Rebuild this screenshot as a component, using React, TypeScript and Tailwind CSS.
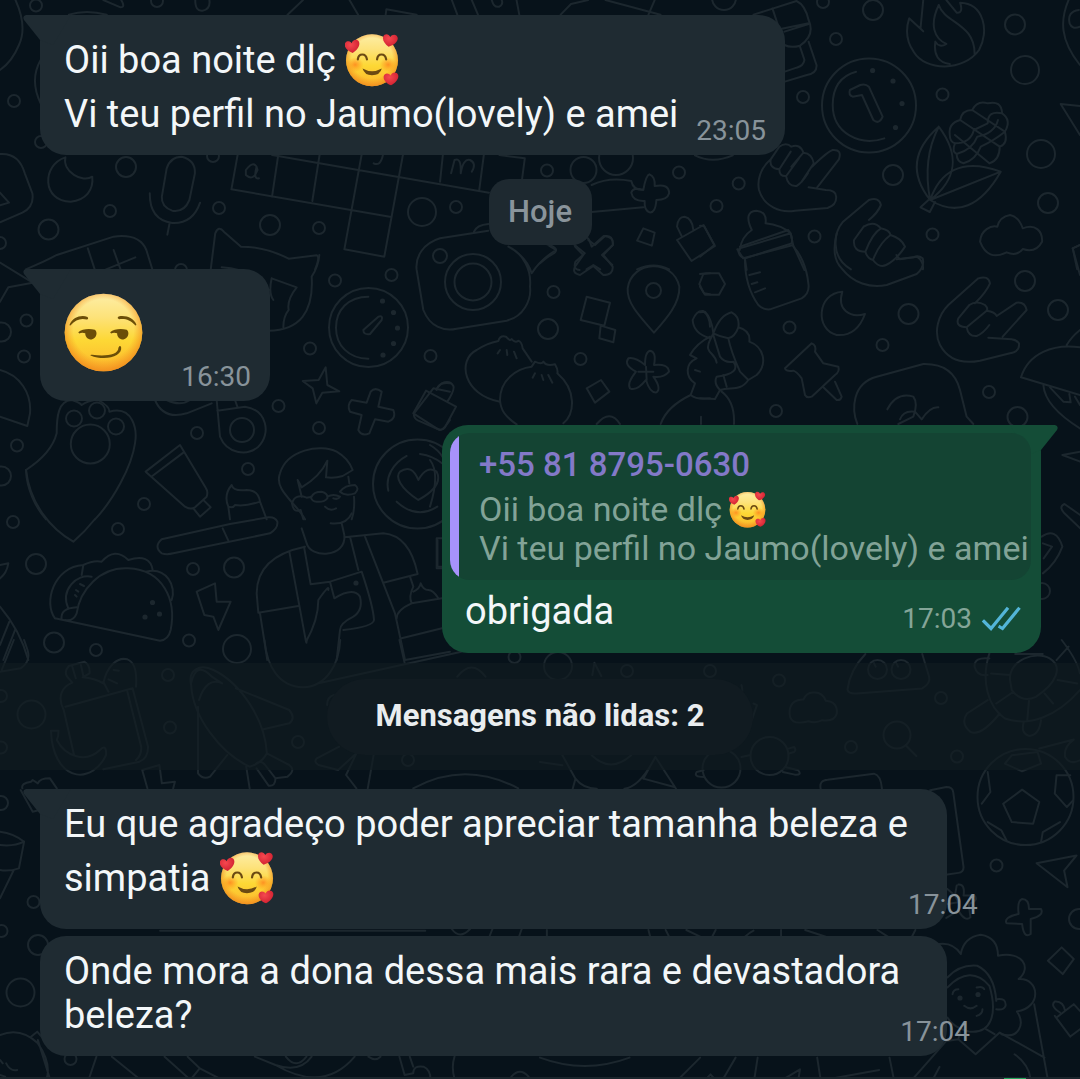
import React from "react";

const CIRCLES: [number, number, number][] = [
  [36, 5.5, 6], [14, 101, 6], [41, 142, 6], [126, 167, 10], [110, 211, 6], [48.5, 229.5, 10], [0, 243, 6],
  [219, 208, 6], [270, 225, 10], [319, 228, 6], [422, 212, 14], [456, 207, 6], [440, 256, 7], [181, 270, 6],
  [213, 156, 6], [157, 1, 6], [724, -2, 12], [823, 2, 6], [873, 10, 10], [836, 39, 6], [1015, 24.5, 10],
  [1025, 70, 14], [803, 97, 6], [942.5, 94.5, 6], [1041, 154, 14], [1048, 203, 10], [893, 175, 10],
  [932.5, 234.5, 6], [814.5, 236.5, 6], [716.5, 206, 6], [738.7, 183.5, 6], [679, 172.5, 6], [547, 170.5, 6],
  [583.5, 170, 13], [616, 158, 17], [869, 105.5, 47], [26.5, 320.5, 6], [1.5, 332, 9.5], [24, 356.5, 6],
  [335, 280.5, 6], [391.5, 275, 6], [310, 348.5, 6], [430.5, 356, 6], [278.5, 406, 6], [319, 428, 6],
  [197, 433, 6], [17, 445.5, 6], [1.5, 476, 9.5], [248, 469, 6], [144, 504, 6], [13, 522, 6],
  [74, 418.5, 8], [97, 410.5, 8], [116, 426.5, 8], [90.3, 444, 19.5], [368.5, 327.5, 39.5], [242, 430, 12],
  [548, 329, 10], [553.5, 292, 6], [580.5, 359, 6], [473, 282, 28], [473, 282, 18.5], [653.5, 290.5, 7.5],
  [789.5, 327.5, 6], [882.5, 345, 6], [908.5, 314, 10], [1025, 281, 10], [1058, 310, 10], [989, 392, 6],
  [1017.5, 417, 10], [776, 411, 6], [36, 564, 10], [54, 642.5, 10], [96, 650, 6], [118, 529, 6],
  [193, 569, 6], [234, 567.5, 10], [189, 640.5, 6], [237, 649, 14], [417.5, 484, 44.5], [1, 696, 6],
  [31.5, 714.5, 14], [1, 747.5, 6], [168, 675, 6], [170, 727.5, 6], [298, 742, 6], [408, 760, 6],
  [514.5, 657, 6], [1, 803, 7], [558, 666, 14], [627, 671, 6], [710, 671, 6], [779, 680.5, 6],
  [941, 698, 6], [851, 747, 6], [957, 756.5, 6], [996.5, 865.5, 6], [1079, 919, 10], [721.5, 768.5, 19],
  [769.5, 756, 19], [897, 735, 13.5], [877.5, 669.5, 9.5], [901, 669.5, 9.5], [1025.5, 797, 48],
  [33.5, 902, 6], [38, 945, 10], [1.5, 931, 6], [20.5, 992.5, 14], [70.5, 1059, 6], [1042, 591, 8],
];

const DOTS: [number, number][] = [
  [872.6, 70.5], [893, 81], [902, 103.5], [895.5, 127.5], [382.5, 301], [393.5, 312.5], [397.5, 328],
  [393.5, 343.5], [383, 355], [152.5, 602.5], [145, 617], [159.5, 614], [356, 583], [960, 998], [978, 994.5],
];

/** Each group of outlines is drawn in its own local space and placed by its transform. */
const DOODLES: { at: string; paths: string[] }[] = [
  {
    at: "translate(0 0) scale(.34435 .33333)",
    paths: [
      "M45 0Q80 80 55 135Q35 185 0 210M118 180Q85 240 118 310M200 44Q250 28 310 44",
      "M300 0L350 22Q365 22 352 0M567 0Q567 35 588 32Q612 28 608 0",
      "M835 44L880 0M1015 0L1040 44M1120 44L1122 28L1210 44M1312 0L1328 44M1370 0L1388 44M1428 0Q1434 24 1450 20Q1462 14 1457 0M1500 0L1508 44",
      "M0 462Q55 458 72 520L94 580Q100 620 65 638L0 667M0 578L26 608L0 616",
      "M190 472C120 495 122 605 205 605C250 600 272 570 268 530C240 550 180 515 190 472Z",
      "M484 505Q495 470 528 470Q568 480 566 520L550 600Q535 638 500 632Q468 620 470 590ZM435 580Q434 660 500 669Q560 672 581 608M492 672L486 704",
      "M690 465L672 568L1132 650M808 465L790 590M928 465L907 603M1050 465L1000 748L1116 770L1170 465M1286 465L1278 545M1405 465L1392 568M1524 475L1516 538M790 465L1420 578M1450 465L1524 475",
      "M714 510Q740 475 748 510Q735 545 714 525ZM745 500Q735 540 752 535",
      "M1085 490Q1105 500 1112 465M1310 520L1320 480Q1340 470 1338 520Q1345 475 1365 480Q1385 490 1370 515",
      "M75 808Q130 785 165 765L330 710Q405 700 425 750L443 810M255 745L275 808M330 750L350 808M308 808L393 772",
      "M612 808L625 700Q635 675 650 695L700 740Q770 740 838 776L920 766Q930 770 915 808",
    ],
  },
  {
    at: "translate(540 0) scale(.34435 .33333)",
    paths: [
      "M60 44L90 12L140 0M190 0L350 44M315 44L333 0M620 44L745 3Q770 15 780 60Q800 105 755 137Q728 145 710 135M675 25L695 88L780 70M710 95L780 72M780 125L803 195Q805 220 775 225L711 245M755 140L768 180Q765 198 745 203L711 215",
      "M918 215C865 230 850 270 850 315C850 400 930 440 1000 415",
      "M900 270Q895 285 908 290L935 285L968 360Q985 375 995 350L955 260Q945 250 930 255Z",
      "M1113 0L1105 85L1113 94L1072 55Q1055 110 1085 155C1120 215 1230 215 1275 150C1305 95 1290 10 1220 8Q1230 40 1210 38L1180 0M1158 15C1130 75 1145 115 1180 132Q1160 145 1148 125Q1140 185 1190 192M1158 15C1175 70 1265 70 1262 165",
      "M1535 0C1510 60 1510 120 1568 195M1565 30Q1530 35 1538 70Q1545 90 1568 80M1568 318L1512 312L1568 405",
      "M1133 600C1080 530 1075 455 1158 380C1220 465 1210 540 1133 600ZM1158 380C1120 455 1120 530 1133 600C1160 520 1220 470 1338 515C1280 620 1210 650 1133 600L1338 515M1128 600L1105 622L1132 636L1147 606",
      "M1190 405Q1185 370 1220 360Q1225 330 1255 330Q1270 300 1300 310Q1340 300 1342 340Q1370 360 1350 395Q1360 430 1335 440Q1335 480 1305 490M1190 405Q1190 425 1205 430Q1195 455 1210 462Q1210 485 1230 490M1205 430Q1250 430 1260 390L1300 370Q1300 330 1342 340M1220 360L1335 440M1255 330L1350 395M1210 462Q1255 450 1270 410Q1320 400 1330 360M1230 490Q1265 480 1280 440Q1320 420 1350 395M1205 405L1305 490",
      "M670 478C640 505 630 540 636 570C650 620 700 640 740 632L835 624Q862 615 860 590Q860 570 830 570L780 562M805 562L868 478Q878 448 850 450Q835 455 790 500M670 478Q665 505 695 508L728 455M670 478L695 440Q715 425 730 440Q755 430 765 458Q790 460 795 490M695 508Q695 530 715 528L752 475M715 530Q720 560 745 558Q760 550 778 520M765 458L730 500M795 490L760 545",
      "M580 750Q585 710 615 690Q590 635 628 632Q660 635 655 670Q700 675 728 700L735 735L590 775L573 748ZM728 700L580 745M595 775L600 810M735 735L768 810",
      "M903 808C840 770 855 695 880 665L955 600Q985 590 990 615Q980 640 955 660M940 680L912 720Q908 755 945 755Q965 700 990 685Q970 660 940 680M990 685Q1015 690 1018 705Q985 730 967 780Q985 805 1005 795Q1035 780 1060 740Q1050 715 1018 705M945 755Q950 775 967 780M1035 765L1045 778L1095 770Q1115 785 1112 808",
      "M1278 725C1280 690 1310 675 1328 680Q1335 650 1365 645Q1390 650 1402 685C1440 670 1460 695 1458 725Q1440 760 1402 747Q1385 770 1355 757Q1300 785 1278 725Z",
      "M300 685L333 698L325 737L282 722ZM398 720L475 675L508 738L440 783ZM412 710L398 680Q400 650 420 650Q442 655 445 688",
      "M150 555Q200 530 265 543Q270 570 300 570Q308 525 318 523Q335 530 333 558Q375 550 375 580Q370 600 338 600Q335 640 318 637Q302 630 304 603Q270 605 265 578Q270 560 300 570M150 636L300 622M450 466Q500 492 560 466",
      "M98 733L130 760L103 785Q95 808 115 810M130 715Q140 705 150 740L185 708Q215 710 212 735L180 765L210 795M135 808L155 795L175 808M282 808Q330 785 375 808M20 733Q60 745 40 760Q20 770 0 790M1547 745L1568 735M1547 745L1560 808",
    ],
  },
  {
    at: "translate(0 250) scale(.33333)",
    paths: [
      "M0 38L98 98L25 112L0 155M665 52Q750 55 806 120M815 85L890 112Q860 150 866 180Q850 200 850 232M958 15Q955 50 935 80Q945 240 806 242M815 85Q805 130 820 150",
      "M1105 140C1045 140 1008 180 1008 233C1008 285 1045 326 1105 326M1090 240L1135 200Q1150 195 1145 210L1110 252Q1090 255 1090 240Z",
      "M977 352L982 405L1018 424L967 428L949 460L938 415L908 393L956 390Z",
      "M1112 425Q1125 410 1145 425L1135 470L1180 480Q1190 505 1165 515L1125 508L1108 550Q1085 560 1075 540L1085 495L1050 485Q1040 465 1055 450L1100 458Z",
      "M1350 425L1300 415L1242 490Q1240 505 1255 512L1320 540Q1330 540 1350 510M1310 420Q1315 395 1350 400",
      "M0 360C60 375 95 430 90 490L82 528L0 500",
      "M170 550C170 500 175 452 215 450Q235 455 245 465Q265 450 295 450Q330 470 328 485C400 465 412 540 405 580C395 650 340 750 285 808M170 550Q155 610 78 660C80 715 105 770 138 808",
      "M465 450Q490 510 560 490L635 460M650 450L660 560C680 610 740 620 775 590C815 550 800 480 735 470L652 482M705 450L712 470M500 450Q540 470 570 450",
      "M540 585L437 665L555 770Q570 780 585 772L620 740Q625 725 618 715ZM457 678L550 608M580 775L600 800L632 772L612 752",
      "M690 808L685 770Q670 735 695 705Q700 725 740 720Q775 720 780 755L800 808M685 770Q700 775 705 765Q735 770 780 755",
      "M915 808C890 760 820 720 840 670C860 600 960 580 1010 605Q1045 625 1058 660L1028 678Q1005 685 978 682L982 632Q960 680 905 712L893 690L905 740",
      "M920 743Q885 730 876 760Q880 790 902 780L910 808M920 743L935 740Q940 725 965 725Q985 730 982 745Q970 758 950 755Q935 755 932 740M982 740Q1000 730 1020 740Q1015 750 1000 745M1020 725Q1035 705 1065 705Q1080 715 1065 730Q1035 740 1020 725M1045 680L1048 700M1062 740Q1065 780 1055 808M975 770Q990 785 1008 775",
      "M1220 618C1180 640 1155 680 1165 722M1260 612Q1300 618 1326 640M1190 755Q1250 810 1312 770M1255 750C1200 715 1185 680 1200 665Q1235 640 1255 690Q1280 645 1310 665C1325 695 1300 725 1255 750Z",
    ],
  },
  {
    at: "translate(270 150) scale(.33333)",
    paths: [
      "M612 245Q620 225 655 222M655 242L510 265C460 280 435 320 440 360L460 480C480 530 520 545 560 536L710 512C760 500 785 450 780 410C785 360 760 310 715 290M715 290Q770 320 785 370Q810 330 858 300L838 288",
      "M915 290L940 315L915 350Q905 370 930 375L970 348L1000 375Q1030 375 1028 350L1000 315L1028 285Q1030 255 1005 258L975 285L955 270",
      "M950 440L1020 458L1003 527L932 510ZM992 527L1036 540L1030 577L988 565Z",
      "M1152 548C1110 500 1070 460 1073 415C1085 330 1210 325 1228 410C1230 460 1190 505 1152 548ZM1320 370L1300 372L1288 402L1302 430L1320 433",
      "M690 755C580 735 560 630 620 600Q650 580 685 573Q690 555 708 560Q720 575 725 567Q735 580 745 572Q755 575 758 595L785 635M690 600L683 610M710 600L712 615M732 605L740 625",
      "M690 750C690 690 740 655 785 650L795 635Q815 645 820 635Q830 650 855 643Q865 660 862 670C920 720 915 790 880 820M740 823C705 800 692 780 690 750M795 670L788 683M815 675L820 690M835 675L847 698",
      "M430 790L468 722L558 770L525 832Q515 845 500 835ZM498 718L515 700Q540 690 550 708Q555 720 532 755M950 715L993 690L1018 725L975 758ZM980 822Q1020 775 1050 822",
      "M1140 602Q1160 605 1152 645Q1195 640 1197 665Q1180 685 1150 680Q1175 715 1160 727Q1140 730 1128 690Q1100 725 1080 715Q1070 700 1098 665Q1060 645 1075 625Q1095 620 1125 645Q1125 605 1140 602ZM1128 650L1130 690M1105 665L1150 665",
      "M1320 565Q1270 550 1268 510Q1280 480 1300 483Q1320 500 1320 530M1320 560Q1280 580 1260 615L1280 625C1245 640 1245 680 1275 700L1262 735Q1280 750 1320 745M1262 735Q1190 770 1172 822M1275 660L1290 665M1293 800V822",
    ],
  },
  {
    at: "translate(700 150) scale(.33333)",
    paths: [
      "M135 330C135 390 150 430 175 465Q190 480 210 478L305 445Q330 430 325 400C320 350 300 310 280 290M120 290L265 240Q280 260 275 280L135 325Q115 320 115 300M148 375L180 367M155 402L172 397M165 427L195 415M0 227L12 228L43 285L0 320M0 372L18 370L57 370L75 402L57 434L15 434L0 410",
      "M410 250C400 290 400 330 425 355C460 400 510 415 560 405L650 372Q675 350 668 325Q655 315 640 322L590 328",
      "M427 425C350 430 345 540 410 555Q470 560 495 492C450 505 410 480 427 425Z",
      "M720 585C700 545 715 495 745 465L835 385Q865 375 870 400Q860 425 825 460M775 505L808 465Q830 450 855 465Q865 475 860 482M775 505Q765 530 800 532L860 482Q885 485 890 498L950 458Q975 455 980 480L908 560M800 532Q805 560 830 558Q850 550 868 525M720 585C750 640 800 640 840 632L930 610Q960 605 957 580Q950 570 935 568L865 563",
      "M0 487L15 485Q35 505 40 550Q60 495 95 487Q120 500 115 532C145 540 150 560 148 575C190 590 205 640 170 675L145 690L120 665C100 620 90 590 85 565Q60 560 40 550L30 570C10 610 45 605 50 638M115 532Q105 560 85 565M40 555L60 620Q75 640 100 635Q125 670 50 680Q40 700 60 720C95 710 120 725 145 690M60 720L45 747L0 745M65 725Q105 755 102 822M70 675L80 710",
      "M335 580Q350 585 345 605L370 640L415 650Q420 665 405 675L335 740Q320 745 315 735L305 685Q290 665 280 662Q255 665 255 655ZM405 695L425 740Q422 752 410 750L370 712",
      "M472 822C455 780 455 700 530 680L670 642Q760 640 780 720L800 800L820 822M562 778Q590 725 640 740Q655 760 640 800L595 822M600 808Q610 780 645 785L665 808Q690 770 715 772",
      "M1140 735L963 682C985 610 1060 580 1140 592M1100 585Q1115 560 1140 540M1030 705Q1035 770 1140 835M1050 712L1090 755L1112 757L1108 732M1125 740L1140 765M1140 285L1118 295L1140 375",
    ],
  },
  {
    at: "translate(0 400) scale(.33333)",
    paths: [
      "M78 210C90 310 150 385 220 425Q255 395 285 357",
      "M690 372L485 418Q460 440 485 460Q500 465 520 460L810 400Q835 385 832 365Q825 350 805 352L690 372M668 385L685 422",
      "M165 655L480 722Q505 720 512 690C530 600 490 510 385 505C300 500 240 570 230 640Q220 665 195 660M165 655C130 610 160 500 250 495Q280 480 305 485Q345 440 385 480Q450 460 458 510M438 515C500 500 530 560 515 600M250 495L245 525M205 625C180 570 230 520 275 530M185 658Q180 625 230 622M228 570L235 575M240 552L252 558M230 590L225 585",
      "M590 575L645 550L650 605L692 605L655 690L640 650L613 645Z",
      "M905 385L920 430C930 475 1040 475 1033 405L1025 370M992 370Q1040 375 1055 340M915 440Q770 470 770 580L775 638L895 618M868 455L918 725Q955 660 955 600Q990 550 985 570M912 440L932 553L990 545M1050 410L1075 510M1033 412L1150 400C1210 405 1240 460 1253 522L1150 548M1095 410L1185 640L1215 780M780 640L802 780M990 545L1085 515Q1120 620 1122 660Q1120 680 1030 690M990 545L1003 595Q1060 560 1080 590Q1090 630 1060 650Q1020 670 1020 690L1010 780",
      "M1326 415L1310 415V505H1326M1230 530L1240 560Q1225 590 1235 610L1326 595M1240 575Q1260 565 1262 550Q1270 570 1285 570Q1300 570 1315 595M1235 610Q1190 630 1190 655M1205 715L1326 685M1215 780L1350 755",
      "M0 495L25 490Q20 520 0 535M0 620Q60 690 85 780M28 665L0 735M45 690L10 780",
    ],
  },
  {
    at: "translate(0 640) scale(.34435 .33333)",
    paths: [
      "M0 95L60 85Q90 65 80 30L70 0M40 0L5 90M768 0C775 80 810 140 880 142C950 140 985 70 988 0M890 0V8M1160 0L1175 68M925 130L1340 35",
      "M185 210C165 170 180 140 210 128L195 110Q185 95 200 78L245 65Q262 75 260 100L240 112Q275 115 300 130M210 80L220 115M235 75L242 108M190 200L385 145L430 320Q430 355 405 365L300 388M300 130C310 80 340 50 370 58Q400 70 395 140M300 125L315 155M330 90L345 92M315 118L340 130M185 210L215 345M370 155L410 320Q412 345 395 360M148 272L170 272Q170 290 165 300C190 350 250 370 290 330Q310 310 308 345C270 430 170 430 150 300Z",
      "M555 135C545 90 580 70 620 90C700 130 770 240 775 340Q760 370 725 380C640 340 560 230 555 135ZM578 180Q600 110 645 130M555 130Q570 60 615 110L645 130M685 145L840 210Q860 235 840 250L765 268M575 200V400Q590 420 610 410L660 345M775 340L840 375Q860 390 835 410L800 415M740 375Q755 355 770 375L800 415Q800 440 780 437L745 385M715 380L725 445",
      "M65 445Q60 430 90 425L95 420L110 430Q115 415 145 415L165 445M413 390L463 375L470 430L508 425L503 445M413 390L428 445M985 320L920 355Q910 365 925 375L982 390L1035 340L1005 405L1035 445M1085 345L1068 445M1200 445Q1350 360 1505 445M1328 110Q1370 55 1410 110M950 195Q950 170 970 165",
    ],
  },
  {
    at: "translate(540 640) scale(.34435 .3341)",
    paths: [
      "M152 105L158 68L178 108M0 365L65 375M65 345L103 415L95 445M103 415Q125 445 165 445M300 415L335 350L395 445M300 415L390 440M245 445Q290 440 335 350M150 345Q205 400 265 345",
      "M725 210C730 180 750 180 765 178Q775 155 795 157Q820 155 830 182Q865 185 862 220Q855 245 820 240Q800 250 780 243Q720 260 725 210ZM1062 315L1093 347",
      "M945 42Q900 90 893 148Q895 162 920 160L1110 145Q1135 130 1130 110L1110 42M970 70L975 80M1035 70L1040 80",
      "M585 350L608 345M722 325L738 320Q745 330 738 335L722 340M712 380L750 390Q762 405 740 403L705 395M475 390L455 395Q445 410 475 410M585 135Q590 150 585 165M620 190L630 195L615 240M815 445Q810 420 835 418L970 400Q990 405 993 445M1133 450L1180 440Q1198 440 1200 455L1230 680Q1230 695 1215 697L1183 702",
      "M1305 55Q1260 50 1262 80Q1270 110 1300 105M1380 42L1460 42M1365 120C1360 60 1440 30 1480 55C1520 80 1500 130 1440 170Q1400 190 1370 150ZM1305 40C1280 120 1300 200 1350 235C1420 260 1500 230 1568 150M1310 100L1365 105M1500 60L1535 20M1503 120L1560 130M1465 160L1490 190M1420 182L1415 240M1375 155L1325 190M1515 0Q1560 60 1568 100M1300 180L1240 220Q1220 250 1250 275Q1280 290 1335 220M1405 245Q1395 280 1420 287Q1450 285 1455 240",
      "M1400 448L1450 485L1432 550L1370 545L1345 490ZM1350 370L1370 345L1445 335L1455 370L1400 393ZM1300 395L1308 455L1283 490M1500 405L1540 405M1500 405L1495 460L1530 500L1548 480M1300 545L1340 570L1355 600M1455 605L1460 575L1510 545M1450 325L1550 298Q1520 320 1525 350Q1540 375 1568 360",
      "M1558 645L1442 668L1532 740L1522 690ZM1215 732Q1235 730 1230 765L1262 765Q1275 780 1245 790L1250 830Q1235 845 1215 810L1180 832M1183 790L1215 785L1205 765M1183 745L1205 765L1210 735",
      "M1400 775Q1420 775 1420 805L1455 805Q1465 825 1425 835L1425 880Q1405 895 1400 850L1355 848Q1345 830 1390 820Q1385 780 1400 775ZM1515 920L1550 955L1518 1000L1475 960Z",
      "M1160 910Q1200 905 1222 940Q1230 890 1280 882Q1330 890 1330 945C1400 930 1430 980 1390 1015C1450 1010 1460 1100 1385 1112C1410 1150 1390 1195 1340 1180M1183 1010Q1220 970 1270 975Q1320 1000 1325 1080M1183 1040Q1250 970 1305 1035C1330 1120 1310 1180 1245 1172Q1200 1160 1183 1130M1325 1075Q1355 1070 1352 1095Q1345 1110 1325 1105M1198 1060Q1200 1045 1215 1045M1268 1040Q1285 1035 1290 1045M1232 1095Q1250 1110 1268 1095M1268 1125Q1285 1120 1285 1105",
      "M1220 1172L1215 1195L1265 1240L1335 1175L1465 1250M1295 1165L1320 1180M1215 1195L1180 1200L1080 1317M1160 1278L1140 1317M1378 1240Q1420 1270 1425 1317M1435 1090L1475 1317M1500 1130L1550 1090L1568 1110M1495 1125L1540 1187L1568 1165M1510 1115Q1480 1095 1495 1082Q1520 1080 1525 1110",
      "M0 1250Q130 1300 260 1250M465 1250L400 1317M568 1250L530 1317M632 1250L622 1317M805 1250L815 1317M1015 1250L1028 1317M480 1317L495 1300L510 1317M715 1310L755 1285L750 1317M860 1310L985 1287",
      "M20 868V888M315 868L320 888M365 868L375 888M425 868L465 888M500 888L510 868M595 888Q610 875 620 870M700 868V888M770 868L830 888M980 868L1010 888M1080 888L1090 868",
    ],
  },
  {
    at: "translate(0 780) scale(.34435 .33333)",
    paths: [
      "M0 155Q40 160 70 185L55 265Q25 275 0 270M0 195Q40 200 70 185M40 270L0 355M60 30L95 95L115 90M465 452H1235M1312 447Q1335 480 1365 447M1430 447L1422 468M1515 447L1508 468",
      "M0 765Q60 740 110 790Q150 850 135 897M90 770L108 755L145 800M110 780L145 897M0 840L8 850M18 850Q30 875 50 870M0 885L15 890M280 830L258 897M325 830L405 897M478 830L550 897M545 830L580 865L555 897M580 865L640 897M740 830L800 855Q870 880 905 830M830 830Q860 870 890 830M800 855Q940 940 1030 830M1160 830L1175 885L1200 880Q1200 855 1230 860Q1250 870 1250 897M1190 830L1200 860M1320 830Q1310 860 1320 897M1485 890Q1510 860 1535 890M1070 830Q1090 845 1105 830",
    ],
  },
  {
    at: "translate(430 410) scale(.41467 .33333)",
    paths: [
      "M1568 125L1525 135L1568 155M1568 355L1530 310Q1515 290 1530 282L1568 315M1475 380Q1510 350 1525 410Q1510 460 1478 490M1478 400L1500 410L1480 445",
      "M0 105Q20 120 30 140M0 150Q25 190 0 290M18 390V470H30",
    ],
  },
];

function Wallpaper() {
  return (
    <svg
      className="absolute inset-0 h-full w-full"
      viewBox="0 0 1080 1079"
      fill="none"
      stroke="#1c272e"
      strokeWidth="2"
      strokeLinecap="round"
      strokeLinejoin="round"
      aria-hidden="true"
    >
      {CIRCLES.map(([cx, cy, r], i) => (
        <circle key={i} cx={cx} cy={cy} r={r} />
      ))}
      {DOTS.map(([cx, cy], i) => (
        <circle key={i} cx={cx} cy={cy} r="2.6" fill="#1c272e" stroke="none" />
      ))}
      {DOODLES.map((group, i) => (
        <g key={i} transform={group.at}>
          {group.paths.map((d, j) => (
            <path key={j} d={d} vectorEffect="non-scaling-stroke" />
          ))}
        </g>
      ))}
    </svg>
  );
}

function EmojiDefs() {
  return (
    <svg className="absolute h-0 w-0" aria-hidden="true">
      <defs>
        <linearGradient id="faceFill" x1="0" y1="0" x2="0" y2="1">
          <stop offset="0" stopColor="#fdeea6" />
          <stop offset=".3" stopColor="#fde27a" />
          <stop offset=".6" stopColor="#fdd835" />
          <stop offset="1" stopColor="#fcb52c" />
        </linearGradient>
        <radialGradient id="faceRim" cx=".5" cy=".46" r=".54">
          <stop offset=".72" stopColor="#f59021" stopOpacity="0" />
          <stop offset="1" stopColor="#f08a1d" stopOpacity=".85" />
        </radialGradient>
        <radialGradient id="blush">
          <stop offset="0" stopColor="#ff7a1c" stopOpacity=".75" />
          <stop offset="1" stopColor="#ff8a1c" stopOpacity="0" />
        </radialGradient>
        <radialGradient id="heartFill" cx=".4" cy=".35" r=".7">
          <stop offset="0" stopColor="#f5484f" />
          <stop offset="1" stopColor="#cf1f2f" />
        </radialGradient>
      </defs>
    </svg>
  );
}

function Heart({ at }: { at: string }) {
  return (
    <path
      transform={at}
      fill="url(#heartFill)"
      d="M-2 20C-14 14 -24 4 -22 -8C-19 -19 -6 -18 -1 -9C3 -19 17 -21 21 -10C24 2 12 14 -2 20Z"
    />
  );
}

function LovedFace({ className }: { className: string }) {
  return (
    <svg className={className} viewBox="32 24 160 160" role="img" aria-label="🥰">
      <circle cx="112" cy="105" r="77" fill="url(#faceFill)" />
      <circle cx="112" cy="105" r="77" fill="url(#faceRim)" />
      <ellipse cx="62" cy="118" rx="25" ry="22" fill="url(#blush)" />
      <ellipse cx="160" cy="118" rx="25" ry="22" fill="url(#blush)" />
      <g fill="none" stroke="#6b4a12" strokeWidth="6.5" strokeLinecap="round">
        <path d="M70 102C72 83 94 83 97 102" />
        <path d="M127 102C129 83 151 83 154 102" />
      </g>
      <path d="M84 129Q112 145 141 129Q136 149 112 149Q90 149 84 129Z" fill="#6b4a12" />
      <Heart at="translate(54 63) rotate(-8)" />
      <Heart at="translate(166 45) rotate(8)" />
      <Heart at="translate(169 159) rotate(-4)" />
    </svg>
  );
}

function SmirkFace() {
  return (
    <svg className="size-[79px]" viewBox="43 40 238 238" role="img" aria-label="😏">
      <circle cx="162" cy="159" r="117" fill="url(#faceFill)" />
      <circle cx="162" cy="159" r="117" fill="url(#faceRim)" />
      <g fill="#6b4e08">
        <path d="M60 135C70 112 95 105 114 112Q118 119 112 120C94 115 78 120 63 137Q59 139 60 135Z" />
        <path d="M205 116Q203 111 210 110C233 107 254 117 261 135Q260 140 256 136C243 120 225 116 209 119Z" />
        <path d="M86 158C97 148 120 146 136 151C145 157 142 177 126 180C114 180 107 172 107 161Q96 158 89 162Z" />
        <path d="M182 158C193 148 216 146 232 151C241 157 238 177 222 180C210 180 203 172 203 161Q192 158 185 162Z" />
        <path d="M123 228Q121 225 128 226C165 231 207 228 207 205Q210 196 215 202C221 232 165 246 123 228Z" />
      </g>
    </svg>
  );
}

function Tail({ side }: { side: "in" | "out" }) {
  return side === "in" ? (
    <svg className="absolute top-0 -left-[17px] h-[30px] w-[48px]" viewBox="0 0 48 30" aria-hidden="true">
      <path d="M48 0H3Q-1 1 1 5L17 25L30 30Z" fill="#1f2b32" />
    </svg>
  ) : (
    <svg className="absolute top-0 -right-[17px] h-[30px] w-[48px]" viewBox="0 0 48 30" aria-hidden="true">
      <path d="M0 0H45Q49 1 47 5L31 25L18 30Z" fill="#144d37" />
    </svg>
  );
}

function Incoming({
  tail,
  time,
  className,
  children,
}: {
  tail?: boolean;
  time: string;
  className: string;
  children: React.ReactNode;
}) {
  return (
    <div
      className={`relative ml-10 flex items-end justify-between rounded-[26px] bg-[#1f2b32] pr-[19px] pl-6 ${className}`}
    >
      {tail && <Tail side="in" />}
      {children}
      <time className="mb-[10px] text-[28px] leading-[28px] text-[#88939a]">{time}</time>
    </div>
  );
}

export default function App() {
  return (
    <main className="relative h-[1079px] w-[1080px] overflow-hidden bg-[#07121a] font-['Roboto',sans-serif] whitespace-nowrap text-[#f3f7f9]">
      <Wallpaper />
      <EmojiDefs />
      <div className="relative flex h-full flex-col pt-[15px]">
        <Incoming tail time="23:05" className="h-[140px] w-[745px]">
          <div className="self-start pt-[18px] text-[38px] leading-[54px]">
            <p className="flex items-center">
              Oii boa noite dlç
              <LovedFace className="ml-[9px] size-[54px]" />
            </p>
            <p>Vi teu perfil no Jaumo(lovely) e amei</p>
          </div>
        </Incoming>

        <div className="mt-6 flex h-[66px] w-[103px] items-center justify-center self-center rounded-[20px] bg-[#1e2930] text-[31px] font-medium text-[#8a949b]">
          Hoje
        </div>

        <Incoming tail time="16:30" className="mt-6 h-[132px] w-[230px]">
          <div className="self-start pt-6">
            <SmirkFace />
          </div>
        </Incoming>

        <div className="relative mt-6 mr-[39px] flex h-[228px] w-[599px] flex-col self-end rounded-[26px] bg-[#144d37] px-2 pt-2">
          <Tail side="out" />
          <div className="relative flex h-[147px] w-[581px] overflow-hidden rounded-[20px] bg-[#144433]">
            <div className="w-[9px] bg-[#a792fb]" />
            <div className="pt-[12px] pl-5 text-[34px] leading-[39px] text-[#82a397]">
              <p className="mb-[6px] text-[33px] font-medium text-[#8379c8]">+55 81 8795-0630</p>
              <p className="flex items-center">
                Oii boa noite dlç
                <LovedFace className="ml-[7px] size-[37px]" />
              </p>
              <p>Vi teu perfil no Jaumo(lovely) e amei</p>
            </div>
          </div>
          <div className="flex items-end justify-between pr-3 pl-[15px]">
            <p className="pt-[9px] text-[38px] leading-[44px]">obrigada</p>
            <div className="flex items-center gap-[9px]">
              <time className="text-[28px] leading-[28px] text-[#84a598]">17:03</time>
              <svg
                className="h-[26px] w-[40px]"
                viewBox="0 0 40 26"
                fill="none"
                stroke="#53b5d8"
                strokeWidth="3.2"
                strokeLinecap="square"
                aria-hidden="true"
              >
                <path d="M3 15.5L10 22.5L26 3M19 21L21.5 22.5L37.500 3" />
              </svg>
            </div>
          </div>
        </div>

        <div className="mt-[10px] flex h-[107px] items-center justify-center bg-[#111b21]/65">
          <div className="flex h-[76px] w-[426px] items-center justify-center rounded-full bg-[#111b21] text-[31px] font-bold text-[#e9edef]">
            Mensagens não lidas: 2
          </div>
        </div>

        <Incoming tail time="17:04" className="mt-[19px] h-[140px] w-[907px]">
          <div className="self-start pt-[8px] text-[38px] leading-[54px]">
            <p>Eu que agradeço poder apreciar tamanha beleza e</p>
            <p className="flex items-center">
              simpatia
              <LovedFace className="ml-[9px] size-[54px]" />
            </p>
          </div>
        </Incoming>

        <Incoming time="17:04" className="mt-[7px] h-[120px] w-[907px]">
          <div className="self-start pt-[13px] text-[38px] leading-[44px]">
            <p>Onde mora a dona dessa mais rara e devastadora</p>
            <p>beleza?</p>
          </div>
        </Incoming>

        <div className="relative mt-[21px] h-[2px] bg-[#1b252c]">
          <div className="absolute top-[1px] left-[1004px] h-[1px] w-[22px] bg-[#21a65b]" />
        </div>
      </div>
    </main>
  );
}
